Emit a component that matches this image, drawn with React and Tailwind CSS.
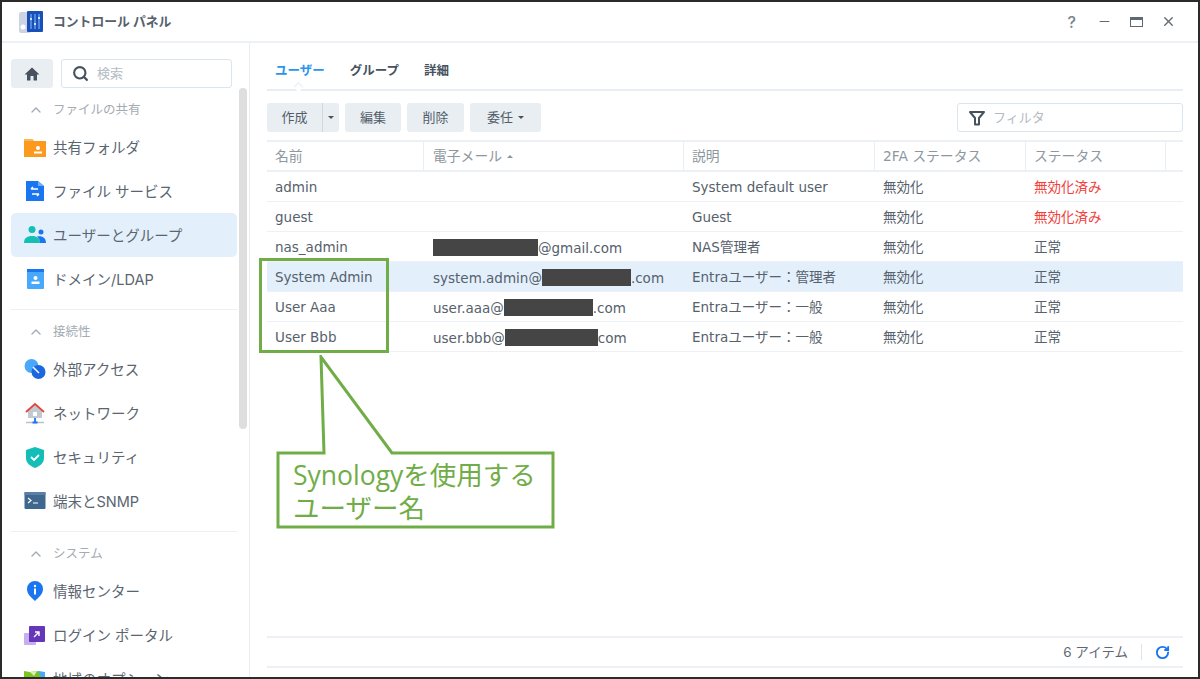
import React from "react";
import { ChevronUp, Search, RotateCw, X, Minus } from "lucide-react";

const JP = "font-['Inter','Noto_Sans_CJK_JP',sans-serif]";
const TBL = "font-['DejaVu_Sans','Noto_Sans_CJK_JP',sans-serif]";
const COLS = "grid grid-cols-[157px_260px_191px_151px_140px_17px]";

const FolderIcon = () => (
  <svg viewBox="0 0 22 22" className="h-[22px] w-[22px]">
    <path d="M0 3h8l2 2h12v16H0z" fill="#fb9a1e" />
    <path d="M0 3h8l2 2H0z" fill="#fdb558" />
    <circle cx="14" cy="12" r="2" fill="#fff" />
    <rect x="10" y="15.5" width="8" height="2" fill="#fff" />
  </svg>
);
const FileServiceIcon = () => (
  <svg viewBox="0 0 22 22" className="h-[22px] w-[22px]">
    <path d="M2 1h12l6 5v15H2z" fill="#1a75f0" />
    <path d="M14 1l6 5h-6z" fill="#6fb0fa" />
    <path d="M7 9h7M7 9l2-2M15 14H8M15 14l-2 2" stroke="#fff" strokeWidth="1.5" fill="none" />
  </svg>
);
const UsersIcon = () => (
  <svg viewBox="0 0 22 22" className="h-[22px] w-[22px]">
    <circle cx="8" cy="5.5" r="3.5" fill="#14c0b4" />
    <circle cx="17" cy="8" r="2.5" fill="#1a75f0" />
    <path d="M0 19c0-5 3-7 8-7s8 2 8 7z" fill="#14c0b4" />
    <path d="M13 12.5c5-1 9 1 9 6.5h-6c0-3-1-5-3-6.500z" fill="#1a75f0" />
  </svg>
);
const DomainIcon = () => (
  <svg viewBox="0 0 22 22" className="h-[22px] w-[22px]">
    <rect x="3" y="1" width="17" height="20" rx="1" fill="#48a8fc" />
    <rect x="3" y="1" width="17" height="3" fill="#1a75f0" />
    <circle cx="11.500" cy="10" r="2" fill="#fff" />
    <rect x="7.500" y="13.500" width="8" height="2.500" fill="#fff" />
  </svg>
);
const LinkIcon = () => (
  <svg viewBox="0 0 22 22" className="h-[22px] w-[22px]">
    <circle cx="7.500" cy="8" r="7" fill="#48a8fc" />
    <circle cx="14.500" cy="14" r="7" fill="#1a68e0" />
    <path d="M9 9l6 6" stroke="#fff" strokeWidth="1.500" />
  </svg>
);
const NetworkIcon = () => (
  <svg viewBox="0 0 22 22" className="h-[22px] w-[22px]">
    <path d="M4 9l7-6 7 6v7H4z" fill="#c3c9d0" />
    <path d="M2 10l9-8 9 8" fill="none" stroke="#e0483c" strokeWidth="1.800" />
    <rect x="9" y="10" width="4" height="4" fill="#fff" />
    <path d="M2 20.500h18" stroke="#b8c0c8" strokeWidth="1.500" />
    <path d="M11 16v4M8.500 20.500h5" stroke="#1a75f0" strokeWidth="1.800" />
  </svg>
);
const ShieldIcon = () => (
  <svg viewBox="0 0 22 22" className="h-[22px] w-[22px]">
    <path d="M11 1l9 3v8c0 5-4 8-9 10-5-2-9-5-9-10V4z" fill="#13bdb8" />
    <path d="M7 11l3 3 5-5" fill="none" stroke="#fff" strokeWidth="1.800" />
  </svg>
);
const TerminalIcon = () => (
  <svg viewBox="0 0 22 22" className="h-[22px] w-[22px]">
    <rect x="0.500" y="2" width="21" height="17" rx="1" fill="#40688f" />
    <rect x="0.500" y="2" width="21" height="3" fill="#5a80a5" />
    <path d="M4 8l3 2.500L4 13M9 13h5" stroke="#fff" strokeWidth="1.200" fill="none" />
  </svg>
);
const InfoIcon = () => (
  <svg viewBox="0 0 22 22" className="h-[22px] w-[22px]">
    <path d="M11 21C7 17 3 14 3 9a8 8 0 0116 0c0 5-4 8-8 12z" fill="#1a75f0" />
    <rect x="10" y="8.500" width="2" height="6" fill="#fff" />
    <circle cx="11" cy="6" r="1.200" fill="#fff" />
  </svg>
);
const PortalIcon = () => (
  <svg viewBox="0 0 22 22" className="h-[22px] w-[22px]">
    <rect x="0" y="9" width="12" height="12" rx="1" fill="#c7aef0" />
    <rect x="5" y="2" width="16" height="16" rx="1" fill="#6536b8" />
    <path d="M10 13l5-5M11 8h4v4" stroke="#fff" strokeWidth="1.400" fill="none" />
  </svg>
);
const MapIcon = () => (
  <svg viewBox="0 0 22 22" className="h-[22px] w-[22px]">
    <path d="M0 3l6 1 7-1 5 1v17H0z" fill="#7cc520" />
    <path d="M6 4l4 4 3-5z" fill="#d8f0b8" />
    <path d="M14 3l7 1v6l-4-1z" fill="#48a8fc" />
  </svg>
);

const sections = [
  {
    title: "ファイルの共有",
    items: [
      { label: "共有フォルダ", icon: <FolderIcon /> },
      { label: "ファイル サービス", icon: <FileServiceIcon /> },
      { label: "ユーザーとグループ", icon: <UsersIcon />, active: true },
      { label: "ドメイン/LDAP", icon: <DomainIcon /> },
    ],
  },
  {
    title: "接続性",
    items: [
      { label: "外部アクセス", icon: <LinkIcon /> },
      { label: "ネットワーク", icon: <NetworkIcon /> },
      { label: "セキュリティ", icon: <ShieldIcon /> },
      { label: "端末とSNMP", icon: <TerminalIcon /> },
    ],
  },
  {
    title: "システム",
    items: [
      { label: "情報センター", icon: <InfoIcon /> },
      { label: "ログイン ポータル", icon: <PortalIcon /> },
      { label: "地域のオプション", icon: <MapIcon /> },
    ],
  },
];

const Redact = ({ w }) => (
  <span className={`inline-block h-[17px] ${w} translate-y-[3px] bg-[#454545] blur-[0.5px]`} />
);

const rows = [
  { name: "admin", email: null, desc: "System default user", status: "無効化済み", off: true },
  { name: "guest", email: null, desc: "Guest", status: "無効化済み", off: true },
  {
    name: "nas_admin",
    email: (<><Redact w="w-[105px]" />@gmail.com</>),
    desc: "NAS管理者",
    status: "正常",
  },
  {
    name: "System Admin",
    email: (<>system.admin@<Redact w="w-[89px]" />.com</>),
    desc: "Entraユーザー：管理者",
    status: "正常",
    selected: true,
  },
  {
    name: "User Aaa",
    email: (<>user.aaa@<Redact w="w-[89px]" />.com</>),
    desc: "Entraユーザー：一般",
    status: "正常",
  },
  {
    name: "User Bbb",
    email: (<>user.bbb@<Redact w="w-[93px]" />com</>),
    desc: "Entraユーザー：一般",
    status: "正常",
  },
];

const Caret = () => <span className="inline-block border-x-[3px] border-t-[3px] border-x-transparent border-t-[#46525e]" />;

const ToolButton = ({ children, className }) => (
  <button className={`flex h-[29px] items-center justify-center rounded-[3px] bg-[#e9eef3] text-[13px] text-[#525d69] ${className}`}>
    {children}
  </button>
);

const Sidebar = () => (
  <aside className="relative w-[248px] shrink-0 overflow-hidden border-r border-[#e8eef4] pl-[9px]">
    <div className="mt-[16px] flex h-[29px] gap-2">
      <button className="flex w-[42px] items-center justify-center rounded-[3px] bg-[#e9eef3]">
        <svg viewBox="0 0 16 16" className="h-4 w-4">
          <path d="M8 1.500L0.500 8.500H3V14.500H6.500V10H9.500V14.500H13V8.500H15.500z" fill="#46525e" />
        </svg>
      </button>
      <div className="flex w-[171px] items-center rounded-[3px] border border-[#dbe5ee] pl-[10px]">
        <Search size={17} strokeWidth={3} className="text-[#46525e]" />
        <span className="ml-[8px] text-[13px] text-[#b4bbc2]">検索</span>
      </div>
    </div>

    {sections.map((s, i) => (
      <div key={s.title} className="w-[226px]">
        {i > 0 && <div className="mt-2 h-px bg-[#eaf0f5]" />}
        <div className="flex h-[37px] items-center pt-[7px] pl-[17px] text-[12.500px] text-[#a3abb3]">
          <ChevronUp size={16} className="mr-[9px] text-[#a3abb3]" />
          {s.title}
        </div>
        {s.items.map((it) => (
          <div
            key={it.label}
            className={`flex h-[44px] items-center rounded-[5px] pl-[13px] text-[14.500px] text-[#5a6570] ${it.active ? "bg-[#e3f0fc]" : ""}`}
          >
            <span className="mr-[7px] flex w-[22px] shrink-0 justify-center">{it.icon}</span>
            <span className="translate-y-px">{it.label}</span>
          </div>
        ))}
      </div>
    ))}

    {/* scrollbar */}
    <div className="absolute top-[45px] left-[237px] h-[341px] w-2 rounded-full bg-[#dedede]" />
  </aside>
);

const UserTable = () => (
  <div className={`mt-2 flex-1 text-[13.500px] ${TBL}`}>
    <div className={`${COLS} h-[32px] items-center border-y-2 border-[#edf1f5] text-[13.800px] text-[#8d97a1]`}>
      {["名前", "電子メール", "説明", "2FA ステータス", "ステータス", ""].map((h, i) => (
        <div key={h} className={`flex h-full items-center ${i === 1 ? "pl-[9px]" : "pl-2"} ${h ? "border-r border-[#e8eef4]" : ""}`}>
          {h}
          {h === "電子メール" && (
            <span className="ml-[5px] inline-block border-x-[3px] border-b-[3px] border-x-transparent border-b-[#8d97a1]" />
          )}
        </div>
      ))}
    </div>
    {rows.map((r) => (
      <div
        key={r.name}
        className={`${COLS} h-[30px] items-center border-b border-[#edf1f5] pt-[2px] whitespace-nowrap text-[#56616c] ${r.selected ? "bg-[#e3f0fc]" : ""}`}
      >
        <div className="pl-2">{r.name}</div>
        <div className="pl-[9px]">{r.email}</div>
        <div className="pl-2">{r.desc}</div>
        <div className="pl-2">無効化</div>
        <div className={`pl-2 ${r.off ? "text-[#f0413c]" : ""}`}>{r.status}</div>
      </div>
    ))}
  </div>
);

const Annotation = () => (
  <>
    <div className="absolute top-[256px] left-[257px] h-[95px] w-[130px] border-[3px] border-[#70ad47]" />
    <svg className="absolute top-[353px] left-[273px] h-[176px] w-[284px]" viewBox="0 0 284 176">
      <path
        d="M46 2 L49 98 H3 V172 H278 V98 H117 Z"
        fill="#fff"
        stroke="#70ad47"
        strokeWidth="3"
      />
    </svg>
    <div className="absolute top-[457px] left-[291px] font-['Open_Sans','Noto_Sans_CJK_JP',sans-serif] text-[26.500px] leading-[33px] text-[#70ad47]">
      Synologyを使用する
      <br />
      ユーザー名
    </div>
  </>
);

export default function App() {
  return (
    <div className={`relative flex h-[679px] w-[1200px] flex-col overflow-hidden border-2 border-[#2b2b2b] bg-white ${JP}`}>
      <header className="flex h-[41px] shrink-0 items-center border-b-2 border-[#edf1f5] pl-4">
        <svg viewBox="0 0 26 24" className="h-[24px] w-[26px]">
          <rect x="1" y="2" width="12" height="21" rx="2" fill="#ccd3e4" />
          <circle cx="5" cy="17" r="2.500" fill="#fff" />
          <rect x="9" y="1" width="16" height="21" rx="1" fill="#1a4fb8" />
          <path d="M13 4v15M17 4v15M21 4v15" stroke="#6fb0fa" strokeWidth="1.200" />
          <path d="M12 9h2M16 14h2M20 8h2" stroke="#fff" strokeWidth="1.500" />
        </svg>
        <span className="ml-[9px] text-[12.800px] font-semibold text-[#56616c]">コントロール パネル</span>
        <div className="ml-auto flex items-center pr-[22px] text-[#5f6973]">
          <span className="mr-[21px] text-[16px] font-medium text-[#7b848d]">?</span>
          <Minus size={15} strokeWidth={1.800} className="mr-[18px]" />
          <span className="mr-[18px] h-[10px] w-[13px] border border-t-[3px] border-[#5f6973]" />
          <X size={15} strokeWidth={2.200} />
        </div>
      </header>

      <div className="flex min-h-0 flex-1">
        <Sidebar />
        <main className="flex min-w-0 flex-1 flex-col pr-[15px] pb-[9px] pl-[17px]">
          <nav className="relative flex h-[48px] shrink-0 items-center gap-[25px] border-b-2 border-[#e8eef4] pt-[10px] pl-2 text-[12.500px] font-bold text-[#46525e]">
            <span className="text-[#2a95f0]">ユーザー</span>
            <span>グループ</span>
            <span>詳細</span>
            <span className="absolute bottom-[-2px] left-[28px] h-[7px] w-[7px] translate-y-[-0.500px] rotate-45 border-t border-l border-[#e8eef4] bg-white" />
          </nav>

          <div className="mt-[12px] flex shrink-0 items-center">
            <ToolButton className="w-[72px]">
              <span className="flex h-full w-[56px] items-center justify-center border-r border-[#cfd7df]">作成</span>
              <span className="flex w-[16px] justify-center"><Caret /></span>
            </ToolButton>
            <ToolButton className="ml-[6px] w-[56px]">編集</ToolButton>
            <ToolButton className="ml-[6px] w-[57px]">削除</ToolButton>
            <ToolButton className="ml-[6px] w-[71px] gap-[5px]">委任 <Caret /></ToolButton>
            <div className="ml-auto flex h-[29px] w-[226px] items-center rounded-[3px] border border-[#dbe5ee] pl-[11px]">
              <svg viewBox="0 0 16 16" className="h-4 w-4">
                <path d="M1 2h14L10 8v6.500H6V8z" fill="none" stroke="#46525e" strokeWidth="2" strokeLinejoin="round" />
              </svg>
              <span className="ml-[8px] text-[13px] text-[#b4bbc2]">フィルタ</span>
            </div>
          </div>

          <UserTable />

          <footer className="flex h-[32px] shrink-0 items-center justify-end border-y-2 border-[#edf1f5] pr-[13px] text-[13.500px] text-[#5f6973]">
            <span>6 アイテム</span>
            <span className="mx-[13px] h-[16px] w-px bg-[#dbe5ee]" />
            <RotateCw size={15} strokeWidth={3} className="text-[#1a75f0]" />
          </footer>
        </main>
      </div>

      <Annotation />
    </div>
  );
}
